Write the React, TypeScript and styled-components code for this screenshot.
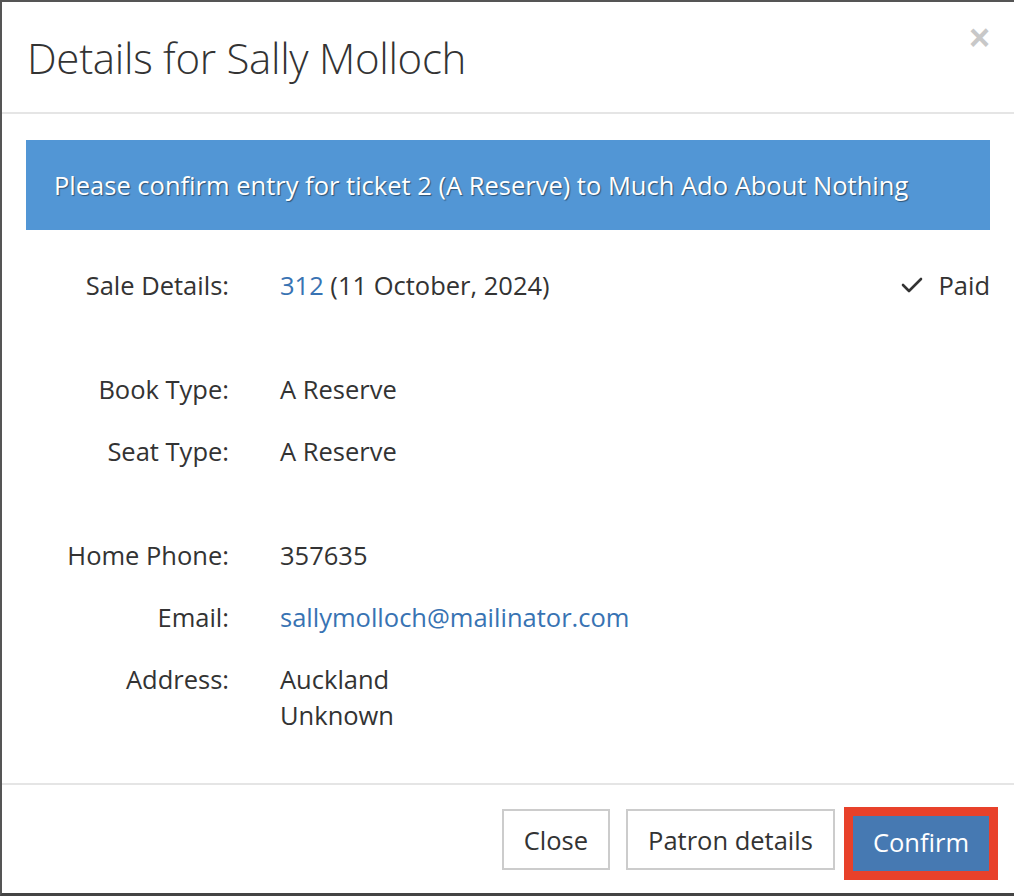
import styled, { createGlobalStyle } from "styled-components";

const GlobalStyle = createGlobalStyle`
  html, body {
    margin: 0;
    padding: 0;
    background: #fff;
  }
  body {
    font-family: "Open Sans", "Noto Sans", "Liberation Sans", sans-serif;
    color: #333;
  }
`;

const Modal = styled.div`
  box-sizing: border-box;
  height: 896px;
  display: flex;
  flex-direction: column;
  background: #fff;
  border-top: 2px solid #555;
  border-left: 2px solid #555;
  border-bottom: 3px solid #444;
`;

const Header = styled.div`
  box-sizing: border-box;
  height: 112px;
  display: flex;
  align-items: center;
  justify-content: space-between;
  padding: 0 24px 0 25px;
  border-bottom: 2px solid #e5e5e5;
`;

const Title = styled.h4`
  margin: 0;
  font-size: 42px;
  font-weight: 300;
  color: #333;
  letter-spacing: -0.3px;
`;

const CloseX = styled.button`
  align-self: flex-start;
  margin-top: 18px;
  padding: 0;
  border: 0;
  background: none;
  font-family: "Liberation Sans", sans-serif;
  font-size: 36px;
  font-weight: 700;
  line-height: 1;
  color: #c8c8c8;
  cursor: pointer;
`;

const Body = styled.div`
  flex: 1;
  padding: 26px 24px 0 24px;
`;

const Banner = styled.div`
  box-sizing: border-box;
  height: 90px;
  display: flex;
  align-items: center;
  padding: 0 28px;
  background: #5296d5;
  color: #fff;
  font-size: 25.5px;
  text-shadow: 1px 1px 1px rgba(0, 0, 0, 0.45);
`;

const Group = styled.div<{ $gap: number }>`
  display: flex;
  flex-direction: column;
  gap: 26px;
  margin-top: ${(p) => p.$gap}px;
`;

const Row = styled.div`
  display: grid;
  grid-template-columns: 203px 1fr auto;
  column-gap: 51px;
  font-size: 25.5px;
  line-height: 36px;
`;

const Label = styled.div`
  text-align: right;
`;

const Value = styled.div``;

const Link = styled.a`
  color: #3873b3;
  text-decoration: none;
`;

const Status = styled.div`
  display: flex;
  align-items: center;
  gap: 15px;
`;

const Footer = styled.div`
  box-sizing: border-box;
  height: 110px;
  display: flex;
  align-items: center;
  justify-content: flex-end;
  padding: 1px 16px 0 0;
  border-top: 2px solid #e5e5e5;
`;

const Button = styled.button<{ $primary?: boolean }>`
  box-sizing: border-box;
  height: ${(p) => (p.$primary ? "55px" : "61px")};
  padding: 0 20px ${(p) => (p.$primary ? "3px" : "0")};
  font-family: "Open Sans", "Noto Sans", sans-serif;
  font-size: 25.5px;
  color: ${(p) => (p.$primary ? "#fff" : "#333")};
  background: ${(p) => (p.$primary ? "#4679b2" : "#fff")};
  border: ${(p) => (p.$primary ? "0" : "2px solid #ccc")};
  border-radius: 0;
  cursor: pointer;
`;

const Highlight = styled.div`
  display: flex;
  border: 9px solid #e8412a;
  margin-left: 9px;
  margin-top: 8px;
`;

const ButtonGap = styled.div`
  width: 16px;
`;

const Check = () => (
  <svg width="22" height="18" viewBox="0 0 22 18">
    <polyline
      points="2,9 8,15 20,3"
      fill="none"
      stroke="#333"
      strokeWidth="2.6"
      strokeLinecap="round"
      strokeLinejoin="round"
    />
  </svg>
);

export default function App() {
  return (
    <>
      <GlobalStyle />
      <Modal>
        <Header>
          <Title>Details for Sally Molloch</Title>
          <CloseX aria-label="Close">×</CloseX>
        </Header>
        <Body>
          <Banner>
            Please confirm entry for ticket 2 (A Reserve) to Much Ado About Nothing
          </Banner>
          <Group $gap={37}>
            <Row>
              <Label>Sale Details:</Label>
              <Value>
                <Link href="#">312</Link> (11 October, 2024)
              </Value>
              <Status>
                <Check />
                Paid
              </Status>
            </Row>
          </Group>
          <Group $gap={68}>
            <Row>
              <Label>Book Type:</Label>
              <Value>A Reserve</Value>
            </Row>
            <Row>
              <Label>Seat Type:</Label>
              <Value>A Reserve</Value>
            </Row>
          </Group>
          <Group $gap={68}>
            <Row>
              <Label>Home Phone:</Label>
              <Value>357635</Value>
            </Row>
            <Row>
              <Label>Email:</Label>
              <Value>
                <Link href="#">sallymolloch@mailinator.com</Link>
              </Value>
            </Row>
            <Row>
              <Label>Address:</Label>
              <Value>
                Auckland
                <br />
                Unknown
              </Value>
            </Row>
          </Group>
        </Body>
        <Footer>
          <Button>Close</Button>
          <ButtonGap />
          <Button>Patron details</Button>
          <Highlight>
            <Button $primary>Confirm</Button>
          </Highlight>
        </Footer>
      </Modal>
    </>
  );
}
